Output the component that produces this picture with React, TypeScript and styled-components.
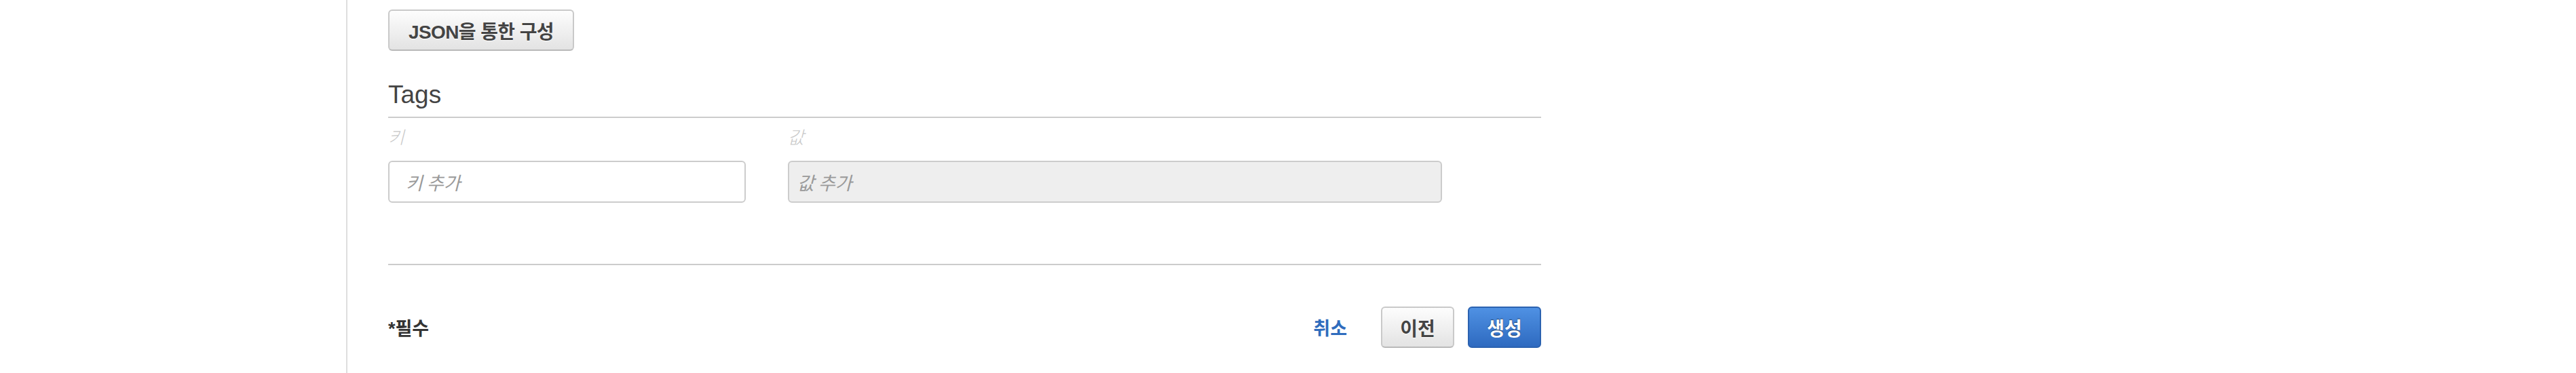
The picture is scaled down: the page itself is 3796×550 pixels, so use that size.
import React from 'react';
import styled, { createGlobalStyle, css } from 'styled-components';

const GlobalStyle = createGlobalStyle`
  html, body {
    margin: 0;
    padding: 0;
    background: #fff;
  }
  body {
    font-family: "Liberation Sans", "Noto Sans CJK KR", Arial, sans-serif;
    color: #444;
  }
`;

const Page = styled.div`
  display: flex;
  min-height: 550px;
`;

const Sidebar = styled.aside`
  width: 510px;
  flex-shrink: 0;
`;

const Main = styled.main`
  flex: 1;
  border-left: 2px solid #dedede;
  padding: 14px 0 0 60px;
`;

const Content = styled.div`
  width: 1699px;
  display: flex;
  flex-direction: column;
`;

const buttonBase = css`
  display: inline-flex;
  align-items: center;
  justify-content: center;
  box-sizing: border-box;
  height: 61px;
  border-radius: 6px;
  font-family: "Liberation Sans", "Noto Sans CJK KR", Arial, sans-serif;
  font-weight: bold;
  font-size: 28px;
  white-space: nowrap;
  cursor: pointer;
`;

const Button = styled.button<{ $primary?: boolean }>`
  ${buttonBase}
  padding: 0 28px;
  ${({ $primary }) =>
    $primary
      ? css`
          color: #fff;
          background: linear-gradient(#4f91e3, #2e6ac0);
          border: 2px solid #2b62b0;
          text-shadow: 0 -1px 1px rgba(0, 0, 0, 0.55);
        `
      : css`
          color: #444;
          background: linear-gradient(#fdfdfd, #e3e3e3);
          border: 2px solid #c9c9c9;
          border-bottom-color: #b9b9b9;
          text-shadow: 0 1px 0 #fff;
        `}
`;

const JsonButton = styled(Button)`
  align-self: flex-start;
  min-width: 272px;
  letter-spacing: -0.6px;
`;

const SectionTitle = styled.h2`
  margin: 43px 0 0;
  padding-bottom: 10px;
  border-bottom: 2px solid #cccccc;
  font-size: 37px;
  line-height: 44px;
  font-weight: normal;
  color: #444;
`;

const TagGrid = styled.div`
  display: grid;
  grid-template-columns: 527px 964px;
  column-gap: 62px;
  row-gap: 17px;
  margin-top: 13px;
`;

const FieldLabel = styled.label`
  font-size: 26px;
  line-height: 33px;
  font-style: italic;
  font-weight: 300;
  color: #c9c9c9;
`;

const TagInput = styled.input<{ $disabled?: boolean; $pad: number }>`
  box-sizing: border-box;
  height: 62px;
  width: 100%;
  border: 2px solid #cccccc;
  border-radius: 6px;
  padding: 0 0 0 ${({ $pad }) => $pad}px;
  font-family: "Noto Sans CJK KR", "Liberation Sans", sans-serif;
  font-size: 27px;
  font-style: italic;
  font-weight: 400;
  color: #444;
  background: ${({ $disabled }) => ($disabled ? '#eeeeee' : '#ffffff')};
  outline: none;

  &::placeholder {
    color: #9a9a9a;
    font-style: italic;
  }
`;

const Divider = styled.hr`
  margin: 90px 0 0;
  border: 0;
  height: 2px;
  background: #cccccc;
`;

const Footer = styled.div`
  display: flex;
  align-items: center;
  justify-content: space-between;
  height: 61px;
  margin-top: 61px;
`;

const Required = styled.span`
  font-size: 27px;
  font-weight: bold;
  color: #333;
`;

const Actions = styled.div`
  display: flex;
  align-items: center;
  gap: 20px;
`;

const CancelLink = styled.a`
  margin-right: 30px;
  font-size: 27px;
  font-weight: bold;
  color: #2f6cbd;
  text-decoration: none;
  cursor: pointer;
`;

const SmallButton = styled(Button)`
  width: 108px;
  padding: 0;
`;

const App: React.FC = () => {
  return (
    <>
      <GlobalStyle />
      <Page>
        <Sidebar />
        <Main>
          <Content>
            <JsonButton>JSON을 통한 구성</JsonButton>
            <SectionTitle>Tags</SectionTitle>
            <TagGrid>
              <FieldLabel htmlFor="tag-key">키</FieldLabel>
              <FieldLabel htmlFor="tag-value">값</FieldLabel>
              <TagInput id="tag-key" placeholder="키 추가" $pad={24} />
              <TagInput id="tag-value" placeholder="값 추가" $pad={12} $disabled readOnly />
            </TagGrid>
            <Divider />
            <Footer>
              <Required>*필수</Required>
              <Actions>
                <CancelLink>취소</CancelLink>
                <SmallButton>이전</SmallButton>
                <SmallButton $primary>생성</SmallButton>
              </Actions>
            </Footer>
          </Content>
        </Main>
      </Page>
    </>
  );
};

export default App;
